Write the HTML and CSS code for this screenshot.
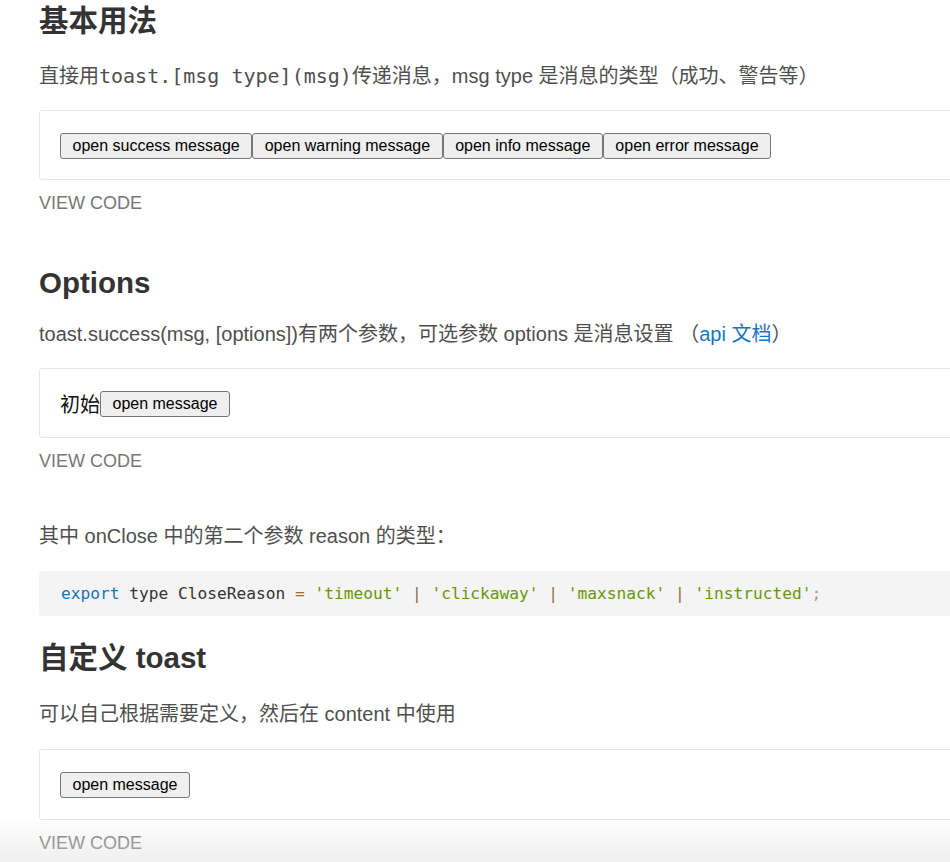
FILE: index.html
```html
<!DOCTYPE html>
<html lang="zh">
<head>
<meta charset="utf-8">
<title>toast</title>
<link rel="stylesheet" href="styles.css">
</head>
<body>
<main class="doc">
  <h2 class="title title-first">基本用法</h2>
  <p class="text text-first">直接用<code class="inline">toast.[msg type](msg)</code>传递消息，msg type 是消息的类型（成功、警告等）</p>
  <div class="demo">
    <div class="btn-row">
      <button class="btn">open success message</button><button class="btn">open warning message</button><button class="btn">open info message</button><button class="btn">open error message</button>
    </div>
  </div>
  <div class="view-code">VIEW CODE</div>

  <h2 class="title">Options</h2>
  <p class="text">toast.success(msg, [options])有两个参数，可选参数 options 是消息设置 （<a class="link" href="#">api 文档</a>）</p>
  <div class="demo">
    <div class="btn-row"><span class="label">初始</span><button class="btn">open message</button></div>
  </div>
  <div class="view-code">VIEW CODE</div>

  <p class="text text-after-demo">其中 onClose 中的第二个参数 reason 的类型：</p>
  <pre class="code"><span class="kw">export</span> type CloseReason <span class="op">=</span> <span class="str">'timeout'</span> <span class="op">|</span> <span class="str">'clickaway'</span> <span class="op">|</span> <span class="str">'maxsnack'</span> <span class="op">|</span> <span class="str">'instructed'</span><span class="punc">;</span></pre>

  <h2 class="title title-after-code">自定义 toast</h2>
  <p class="text text-cjk">可以自己根据需要定义，然后在 content 中使用</p>
  <div class="demo demo-last">
    <div class="btn-row"><button class="btn">open message</button></div>
  </div>
  <div class="view-code">VIEW CODE</div>
</main>
<div class="bottom-shade"></div>
</body>
</html>
```
FILE: styles.css
```css
html, body {
  margin: 0;
  padding: 0;
  background: #fff;
  overflow: hidden;
}

body {
  font-family: "Liberation Sans", "Noto Sans CJK SC", sans-serif;
  color: #4f4f4f;
}

.doc {
  width: 960px;
  padding-left: 39px;
}

.title {
  margin: 49px 0 0;
  font-size: 29.5px;
  line-height: 38px;
  font-weight: 700;
  color: #333;
}

.title-first {
  margin-top: 2px;
}

.title-after-code {
  margin-top: 23px;
}

.text {
  margin: 18px 0 0;
  font-family: "Liberation Sans", "Noto Sans CJK SC", sans-serif;
  font-size: 20px;
  line-height: 28px;
  color: #4f4f4f;
}

.text-first {
  margin-top: 22px;
}

.text-after-demo {
  margin-top: 49px;
}

.text-cjk {
  margin-top: 23px;
}

.inline {
  font-family: "DejaVu Sans Mono", "Liberation Mono", "Noto Sans CJK SC", monospace;
  font-size: 20px;
  color: #4f4f4f;
}

.link {
  color: #1677bd;
  text-decoration: none;
}

.demo {
  margin-top: 20px;
  border: 1px solid #e6e6e6;
  border-radius: 3px;
  padding: 22px 20px 20px;
}

.demo-last {
  margin-top: 21px;
  padding-bottom: 21px;
}

.btn-row {
  display: flex;
  align-items: center;
}

.label {
  font-size: 20px;
  line-height: 26px;
  color: #111;
  font-family: "Noto Sans CJK SC", sans-serif;
}

.btn {
  font-family: "Liberation Sans", Arial, sans-serif;
  font-size: 16px;
  line-height: 22px;
  height: 26px;
  padding: 0 11.5px;
  margin: 0;
  border: 1px solid #777;
  border-radius: 3px;
  background: #efefef;
  color: #000;
}

.view-code {
  margin-top: 11px;
  font-size: 18px;
  line-height: 24px;
  color: #777;
}

.code {
  margin: 21px 0 0;
  background: #f4f4f4;
  border-radius: 3px;
  padding: 10px 22px;
  font-family: "DejaVu Sans Mono", "Liberation Mono", monospace;
  font-size: 16.2px;
  line-height: 25px;
  color: #333;
}

.kw { color: #1a73b4; }
.op { color: #9a6e3a; }
.str { color: #669900; }
.punc { color: #999; }

.bottom-shade {
  position: fixed;
  left: 0;
  right: 0;
  bottom: 0;
  height: 44px;
  pointer-events: none;
  background: linear-gradient(to bottom, rgba(230,230,230,0) 0%, rgba(225,225,225,0.55) 100%);
}
```
